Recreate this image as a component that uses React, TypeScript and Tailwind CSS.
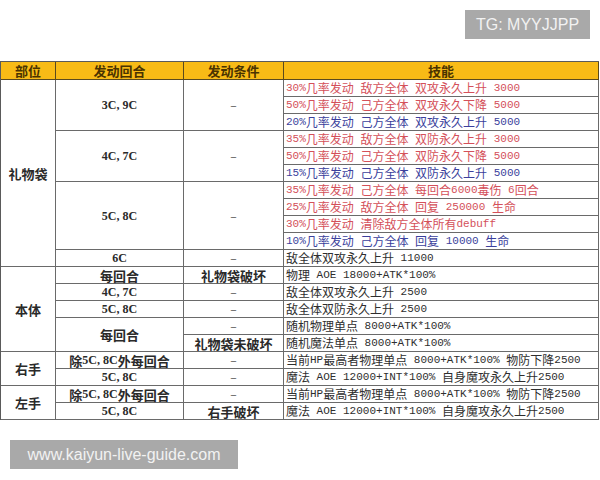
import React from "react";

type Row = { text: string; color: "red" | "blue" | "black" };

const skills: Row[] = [
  { text: "30%几率发动 敌方全体 双攻永久上升 3000", color: "red" },
  { text: "50%几率发动 己方全体 双攻永久下降 5000", color: "red" },
  { text: "20%几率发动 己方全体 双攻永久上升 5000", color: "blue" },
  { text: "35%几率发动 敌方全体 双防永久上升 3000", color: "red" },
  { text: "50%几率发动 己方全体 双防永久下降 5000", color: "red" },
  { text: "15%几率发动 己方全体 双防永久上升 5000", color: "blue" },
  { text: "35%几率发动 己方全体 每回合6000毒伤 6回合", color: "red" },
  { text: "25%几率发动 敌方全体 回复 250000 生命", color: "red" },
  { text: "30%几率发动 清除敌方全体所有debuff", color: "red" },
  { text: "10%几率发动 己方全体 回复 10000 生命", color: "blue" },
  { text: "敌全体双攻永久上升 11000", color: "black" },
  { text: "物理 AOE 18000+ATK*100%", color: "black" },
  { text: "敌全体双攻永久上升 2500", color: "black" },
  { text: "敌全体双防永久上升 2500", color: "black" },
  { text: "随机物理单点 8000+ATK*100%", color: "black" },
  { text: "随机魔法单点 8000+ATK*100%", color: "black" },
  { text: "当前HP最高者物理单点 8000+ATK*100% 物防下降2500", color: "black" },
  { text: "魔法 AOE 12000+INT*100% 自身魔攻永久上升2500", color: "black" },
  { text: "当前HP最高者物理单点 8000+ATK*100% 物防下降2500", color: "black" },
  { text: "魔法 AOE 12000+INT*100% 自身魔攻永久上升2500", color: "black" },
];

function Mixed({ text, latinClass }: { text: string; latinClass: string }) {
  const parts = text.split(/([\x00-\xff]+)/).filter((p) => p.length > 0);
  return (
    <>
      {parts.map((p, i) =>
        /[\x00-\xff]/.test(p) ? (
          <span key={i} className={latinClass}>
            {p}
          </span>
        ) : (
          <span key={i}>{p}</span>
        )
      )}
    </>
  );
}

const colorClass: Record<string, string> = {
  red: "text-[#d4505a]",
  blue: "text-[#3b3f9c]",
  black: "text-[#2e2e2e]",
};

type Span = { text: string; start: number; span: number };

const col1: Span[] = [
  { text: "礼物袋", start: 2, span: 11 },
  { text: "本体", start: 13, span: 5 },
  { text: "右手", start: 18, span: 2 },
  { text: "左手", start: 20, span: 2 },
];

const col2: Span[] = [
  { text: "3C, 9C", start: 2, span: 3 },
  { text: "4C, 7C", start: 5, span: 3 },
  { text: "5C, 8C", start: 8, span: 4 },
  { text: "6C", start: 12, span: 1 },
  { text: "每回合", start: 13, span: 1 },
  { text: "4C, 7C", start: 14, span: 1 },
  { text: "5C, 8C", start: 15, span: 1 },
  { text: "每回合", start: 16, span: 2 },
  { text: "除5C, 8C外每回合", start: 18, span: 1 },
  { text: "5C, 8C", start: 19, span: 1 },
  { text: "除5C, 8C外每回合", start: 20, span: 1 },
  { text: "5C, 8C", start: 21, span: 1 },
];

const col3: Span[] = [
  { text: "–", start: 2, span: 3 },
  { text: "–", start: 5, span: 3 },
  { text: "–", start: 8, span: 4 },
  { text: "–", start: 12, span: 1 },
  { text: "礼物袋破坏", start: 13, span: 1 },
  { text: "–", start: 14, span: 1 },
  { text: "–", start: 15, span: 1 },
  { text: "–", start: 16, span: 1 },
  { text: "礼物袋未破坏", start: 17, span: 1 },
  { text: "–", start: 18, span: 1 },
  { text: "–", start: 19, span: 1 },
  { text: "–", start: 20, span: 1 },
  { text: "右手破坏", start: 21, span: 1 },
];

const boldLatin = "font-['Liberation_Serif',serif] text-[12px]";

export default function App() {
  return (
    <div className="w-[600px] h-[480px] bg-white overflow-hidden font-['Noto_Sans_CJK_SC',sans-serif]">
      <div className="h-[61px] flex justify-end pt-[10px] pr-[10px]">
        <div className="w-[125px] h-[29px] bg-[#a9a9a9] flex items-center justify-center text-[16px] text-[#f2f2f2] font-['Liberation_Sans',sans-serif]">
          TG: MYYJJPP
        </div>
      </div>

      <div className="w-[599px] grid grid-cols-[55px_128px_100px_315px] grid-rows-[18px_repeat(20,17px)] border-l border-t border-[#5a5a5a]">
        {["部位", "发动回合", "发动条件", "技能"].map((h) => (
          <div
            key={h}
            className="row-start-1 bg-[#f8bb16] border-r border-b border-[#5a4a1e] flex items-center justify-center text-[13px] font-bold text-[#4a3300] leading-none"
          >
            {h}
          </div>
        ))}

        {col1.map((c) => (
          <div
            key={c.text}
            className="col-start-1 border-r border-b border-[#6a6a6a] flex items-center justify-center text-[13px] font-bold text-[#2a2a2a] leading-none"
            style={{ gridRow: `${c.start} / span ${c.span}` }}
          >
            {c.text}
          </div>
        ))}

        {col2.map((c, i) => (
          <div
            key={"c2" + i}
            className="col-start-2 border-r border-b border-[#6a6a6a] flex items-center justify-center text-[13px] font-bold text-[#2a2a2a] leading-none whitespace-pre"
            style={{ gridRow: `${c.start} / span ${c.span}` }}
          >
            <Mixed text={c.text} latinClass={boldLatin} />
          </div>
        ))}

        {col3.map((c, i) => (
          <div
            key={"c3" + i}
            className={
              "col-start-3 border-r border-b border-[#6a6a6a] flex items-center justify-center leading-none " +
              (c.text === "–"
                ? "text-[12px] text-[#555555]"
                : "text-[13px] font-bold text-[#2a2a2a]")
            }
            style={{ gridRow: `${c.start} / span ${c.span}` }}
          >
            {c.text}
          </div>
        ))}

        {skills.map((s, i) => (
          <div
            key={"s" + i}
            className={
              "col-start-4 border-r border-b border-[#6a6a6a] flex items-center px-[2px] text-[12px] leading-none whitespace-pre " +
              colorClass[s.color]
            }
            style={{ gridRow: `${i + 2} / span 1` }}
          >
            <Mixed text={s.text} latinClass="font-['Liberation_Mono',monospace] text-[11px]" />
          </div>
        ))}
      </div>

      <div className="mt-[20px] ml-[10px] w-[228px] h-[29px] bg-[#a9a9a9] flex items-center justify-center text-[16px] text-[#f2f2f2] font-['Liberation_Sans',sans-serif]">
        www.kaiyun-live-guide.com
      </div>
    </div>
  );
}
